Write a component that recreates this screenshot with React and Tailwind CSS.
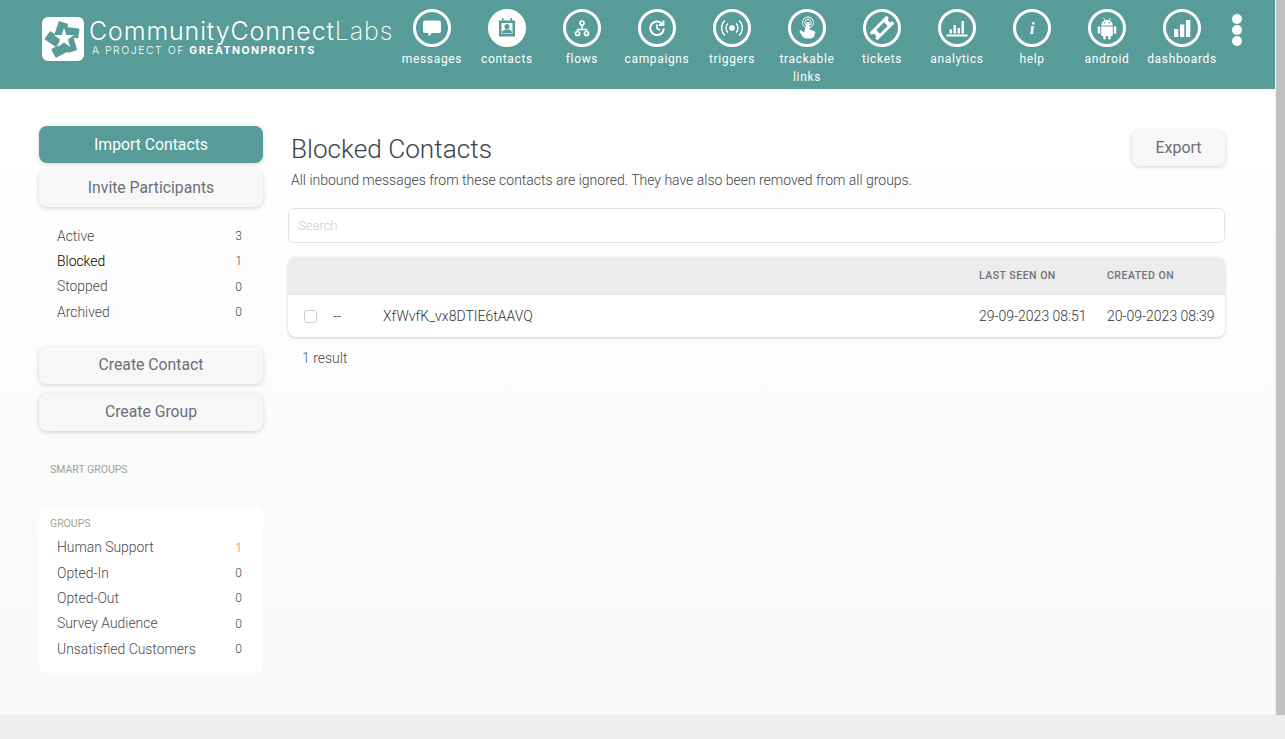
import React from 'react';

const Logo = () => (
  <div className="flex items-center gap-[5px]">
    <div className="w-[42px] h-[44px] rounded-md bg-white shrink-0">
      <svg viewBox="0 0 42 44" className="w-[42px] h-[44px]">
        <g fill="#579c98">
          <rect x="14.5" y="5" width="10" height="15" rx="1" transform="rotate(18 19 12)" />
          <rect x="21" y="10.500" width="16" height="10" rx="1" transform="rotate(7 29 15)" />
          <rect x="23.500" y="19" width="10" height="16" rx="1" transform="rotate(-16 28 28)" />
          <rect x="10.500" y="28" width="16" height="10" rx="1" transform="rotate(-28 18 33)" />
          <rect x="4" y="17" width="14" height="10" rx="1" transform="rotate(35 11 22)" />
        </g>
        <polygon
          fill="white"
          points="22,11 24.400,18 32,18 26,22.500 28.200,30 22,25.500 15.800,30 18,22.500 12,18 19.600,18"
        />
      </svg>
    </div>
    <div className="text-white font-['Inter',sans-serif] -mt-[3px]">
      <div className="text-[25px] leading-[26px] tracking-[0.85px] whitespace-nowrap font-light">
        CommunityConnect<span className="font-extralight">Labs</span>
      </div>
      <div className="text-[10.500px] leading-[13px] ml-[3px] tracking-[1.5px] whitespace-nowrap font-light">
        A PROJECT OF <span className="font-bold">GREATNONPROFITS</span>
      </div>
    </div>
  </div>
);

const iconCls = 'w-[24px] h-[24px]';

const MessagesIcon = () => (
  <svg viewBox="0 0 24 24" className={iconCls} fill="white">
    <path d="M5.500 4.500h13a2.500 2.500 0 0 1 2.500 2.500v7.500a2.500 2.500 0 0 1-2.500 2.500h-6.500l-3.500 3.500v-3.500h-3a2.500 2.500 0 0 1-2.500-2.500v-7.500a2.500 2.500 0 0 1 2.500-2.500z" />
  </svg>
);

const ContactsIcon = () => (
  <svg viewBox="0 0 24 24" className={iconCls} fill="#579c98">
    <path fillRule="evenodd" d="M7 2h1.500v2.500h7v-2.500h1.500v2.500h3v16h-16v-16h3zM6.500 7v11h11v-11z" />
    <circle cx="12" cy="10.500" r="2.600" />
    <path d="M6.800 17.500c0-3 2.300-4 5.200-4s5.200 1 5.200 4z" />
  </svg>
);

const FlowsIcon = () => (
  <svg viewBox="0 0 24 24" className={iconCls} fill="none" stroke="white">
    <circle cx="12" cy="7" r="2" strokeWidth="1.700" />
    <path d="M12 9v4.500M7.500 16v-2.500h9v2.500" strokeWidth="1.500" />
    <circle cx="7.500" cy="17.500" r="2" strokeWidth="1.700" />
    <circle cx="16.500" cy="17.500" r="2" strokeWidth="1.700" />
  </svg>
);

const CampaignsIcon = () => (
  <svg viewBox="0 0 24 24" className={iconCls} fill="none" stroke="white" strokeWidth="2">
    <path d="M17.300 8a6.800 6.800 0 1 0 1.500 4.500" />
    <path d="M18.500 4.500v4.500h-4.500" strokeWidth="1.800" />
    <path d="M12 8.500v4l3 1.500" strokeWidth="1.800" />
  </svg>
);

const TriggersIcon = () => (
  <svg viewBox="0 0 24 24" className={iconCls} fill="none" stroke="white" strokeWidth="1.300">
    <circle cx="12" cy="12" r="2.800" fill="white" stroke="none" />
    <path d="M7.800 7.500a6.500 6.500 0 0 0 0 9M16.200 7.500a6.500 6.500 0 0 1 0 9" />
    <path d="M4.800 4.500a10.500 10.500 0 0 0 0 15M19.200 4.500a10.500 10.500 0 0 1 0 15" />
  </svg>
);

const TouchIcon = () => (
  <svg viewBox="0 0 24 24" className={iconCls}>
    <g fill="none" stroke="white" strokeWidth="1">
      <circle cx="13" cy="6.500" r="5.500" />
      <circle cx="13" cy="6.500" r="3.200" />
    </g>
    <path
      fill="white"
      d="M11.500 7a1.500 1.500 0 0 1 3 0v6.500l4.500 1.500c1 .5 1.500 1 1.200 2l-1 3c-.5 1.500-2 2.500-3.500 2.500h-4c-2 0-3.500-1-4.500-2.500l-2.500-4c-.5-1 .5-2 1.500-1.500l3 2z"
    />
  </svg>
);

const TicketsIcon = () => (
  <svg viewBox="0 0 24 24" className={iconCls} fill="white">
    <g transform="rotate(-45 12 12)">
      <path
        fillRule="evenodd"
        d="M0 6.500h24v3a2.500 2.500 0 0 0 0 5v3h-24v-3a2.500 2.500 0 0 0 0-5zM6.500 9.500v5h11v-5z"
      />
    </g>
  </svg>
);

const AnalyticsIcon = () => (
  <svg viewBox="0 0 24 24" className={iconCls} fill="white">
    <rect x="1.500" y="18.500" width="21" height="2" />
    <rect x="4.500" y="13.500" width="2.500" height="4" />
    <rect x="8.500" y="9" width="2.500" height="8.500" />
    <rect x="12.500" y="12" width="2.500" height="5.500" />
    <rect x="16.500" y="5" width="2.500" height="12.500" />
  </svg>
);

const DashboardsIcon = () => (
  <svg viewBox="0 0 24 24" className={iconCls} fill="white">
    <rect x="4" y="13" width="4.300" height="8" />
    <rect x="10" y="8.500" width="4.300" height="12.500" />
    <rect x="16" y="4" width="4.300" height="17" />
  </svg>
);

const AndroidIcon = () => (
  <svg viewBox="0 0 24 24" className={iconCls} fill="white">
    <path d="M8.500 2l1.500 2.500M15.500 2l-1.500 2.500" stroke="white" strokeWidth="0.900" fill="none" />
    <path d="M6.200 9.500a5.800 5.800 0 0 1 11.600 0z" />
    <circle cx="9.700" cy="6.800" r="0.800" fill="#579c98" />
    <circle cx="14.300" cy="6.800" r="0.800" fill="#579c98" />
    <path d="M6.200 10.500h11.600v8.500a1 1 0 0 1-1 1h-9.600a1 1 0 0 1-1-1z" />
    <rect x="2.700" y="10.300" width="2.500" height="7.500" rx="1.250" />
    <rect x="18.800" y="10.300" width="2.500" height="7.500" rx="1.250" />
    <rect x="8.300" y="19" width="2.500" height="4.500" rx="1.250" />
    <rect x="13.200" y="19" width="2.500" height="4.500" rx="1.250" />
  </svg>
);

const HelpIcon = () => (
  <span className="text-[17px] leading-none font-bold italic text-white font-['Liberation_Serif',serif]">i</span>
);

const navItems = [
  { label: 'messages', icon: <MessagesIcon /> },
  { label: 'contacts', icon: <ContactsIcon />, active: true },
  { label: 'flows', icon: <FlowsIcon /> },
  { label: 'campaigns', icon: <CampaignsIcon /> },
  { label: 'triggers', icon: <TriggersIcon /> },
  { label: 'trackable links', icon: <TouchIcon /> },
  { label: 'tickets', icon: <TicketsIcon /> },
  { label: 'analytics', icon: <AnalyticsIcon /> },
  { label: 'help', icon: <HelpIcon /> },
  { label: 'android', icon: <AndroidIcon /> },
  { label: 'dashboards', icon: <DashboardsIcon /> },
];

const NavItem = ({ label, icon, active }) => (
  <div className="w-[75px] shrink-0 flex flex-col items-center">
    <div
      className={`w-[38px] h-[38px] rounded-full border-[3px] border-white flex items-center justify-center ${
        active ? 'bg-white' : ''
      }`}
    >
      {icon}
    </div>
    <div className="mt-[3px] w-[62px] text-center text-[12px] leading-[18px] font-normal tracking-[0.65px] text-white flex justify-center">
      <span className="block">{label}</span>
    </div>
  </div>
);

const Header = () => (
  <header className="h-[89px] bg-[#579c98] flex items-start shrink-0">
    <div className="w-[394.500px] shrink-0 pl-[42px] pt-[17px]">
      <Logo />
    </div>
    <nav className="flex pt-[9px]">
      {navItems.map((item) => (
        <NavItem key={item.label} {...item} />
      ))}
    </nav>
    <div className="ml-[12px] pt-[14px] flex flex-col gap-[1px]">
      <span className="block w-[10px] h-[10px] rounded-full bg-white" />
      <span className="block w-[10px] h-[10px] rounded-full bg-white" />
      <span className="block w-[10px] h-[10px] rounded-full bg-white" />
    </div>
  </header>
);

const SideButton = ({ children, primary, className = '' }) => (
  <button
    className={`w-full h-[37px] rounded-lg text-[15.750px] leading-[35px] font-normal shadow-[0_1px_4px_rgba(0,0,0,0.18)] ${
      primary ? 'bg-[#579c98] text-white pb-[1px]' : 'bg-[#f7f7f7] text-[#6b6f78] pb-[2px]'
    } ${className}`}
  >
    {children}
  </button>
);

const CountRow = ({ name, count, dark, countClass = 'text-[#444]' }) => (
  <div className="h-[25.400px] flex items-center justify-between pl-[18px] pr-[21px]">
    <span className={`text-[13.900px] font-light ${dark ? 'text-[#000]' : 'text-[#4a4a4a]'}`}>{name}</span>
    <span className={`text-[12px] font-light ${countClass}`}>{count}</span>
  </div>
);

const Sidebar = () => (
  <aside className="w-[224px] shrink-0 pt-[37px]">
    <SideButton primary>Import Contacts</SideButton>
    <SideButton className="mt-[7px]">Invite Participants</SideButton>
    <div className="mt-[16.400px]">
      <CountRow name="Active" count="3" />
      <CountRow name="Blocked" count="1" dark />
      <CountRow name="Stopped" count="0" />
      <CountRow name="Archived" count="0" />
    </div>
    <SideButton className="mt-[21.600px]">Create Contact</SideButton>
    <SideButton className="mt-[10px]">Create Group</SideButton>
    <div className="mt-[32px] pl-[11px] text-[10.500px] leading-[14px] text-[#9aa592]">SMART GROUPS</div>
    <div className="mt-[29px] h-[167px] rounded-lg bg-white pt-[11px]">
      <div className="pl-[11px] text-[10.500px] leading-[14px] text-[#9aa592]">GROUPS</div>
      <div className="mt-[4.400px]">
        <CountRow name="Human Support" count="1" countClass="text-[#c28a3e]" />
        <CountRow name="Opted-In" count="0" />
        <CountRow name="Opted-Out" count="0" />
        <CountRow name="Survey Audience" count="0" />
        <CountRow name="Unsatisfied Customers" count="0" />
      </div>
    </div>
  </aside>
);

const Content = () => (
  <section className="w-[937px] ml-[25px] shrink-0 pt-[41px]">
    <div className="flex items-start justify-between">
      <div className="pl-[3px]">
        <h1 className="text-[26.200px] leading-[38px] font-light text-[#3c4248]">Blocked Contacts</h1>
        <p className="mt-[2px] text-[14px] leading-[20px] tracking-[-0.01px] font-light text-[#444]">
          All inbound messages from these contacts are ignored. They have also been removed from all groups.
        </p>
      </div>
      <button className="w-[93px] h-[36px] rounded-lg bg-[#f7f7f7] text-[16px] text-[#6b6f78] shadow-[0_1px_4px_rgba(0,0,0,0.18)]">
        Export
      </button>
    </div>
    <input
      placeholder="Search"
      className="mt-[18px] block w-full h-[35px] rounded-md border border-[#e2e2e2] bg-white px-[9px] text-[13px] font-light placeholder:text-[#c5d0c8] outline-none"
    />
    <div className="mt-[14px] rounded-lg bg-white shadow-[0_1px_3px_rgba(0,0,0,0.2)] overflow-hidden">
      <div className="h-[38px] bg-[#ececec] border-b border-[#e2e2e2] flex items-center text-[10.500px] font-medium tracking-[0.5px] text-[#6f7278]">
        <span className="ml-[691px] w-[128px]">LAST SEEN ON</span>
        <span>CREATED ON</span>
      </div>
      <div className="h-[42px] flex items-center text-[14px] font-light text-[#333]">
        <span className="ml-[16px] w-[13px] h-[13px] rounded-[3px] border border-[#d0d0d0] bg-white shrink-0" />
        <span className="ml-[16px] w-[50px]">--</span>
        <span className="w-[596px]">XfWvfK_vx8DTIE6tAAVQ</span>
        <span className="w-[128px]">29-09-2023 08:51</span>
        <span>20-09-2023 08:39</span>
      </div>
    </div>
    <div className="mt-[11px] pl-[14px] text-[14px] leading-[20px] font-light text-[#444]">
      <span className="text-[#2f74c0]">1</span> result
    </div>
  </section>
);

export default function App() {
  return (
    <div className="w-[1285px] h-[739px] flex flex-col overflow-hidden bg-[#eeeeee] font-['Roboto',sans-serif]">
      <div className="h-[715px] flex shrink-0">
        <div className="w-[1275px] flex flex-col shrink-0">
          <Header />
          <main className="flex-1 flex pl-[39px] bg-gradient-to-b from-white to-[#f8f8f8]">
            <Sidebar />
            <Content />
          </main>
        </div>
        <div className="flex-1 bg-[#f1f1f1] pl-[1px]">
          <div className="h-full bg-[#c1c1c1]" />
        </div>
      </div>
      <div className="flex-1" />
    </div>
  );
}
